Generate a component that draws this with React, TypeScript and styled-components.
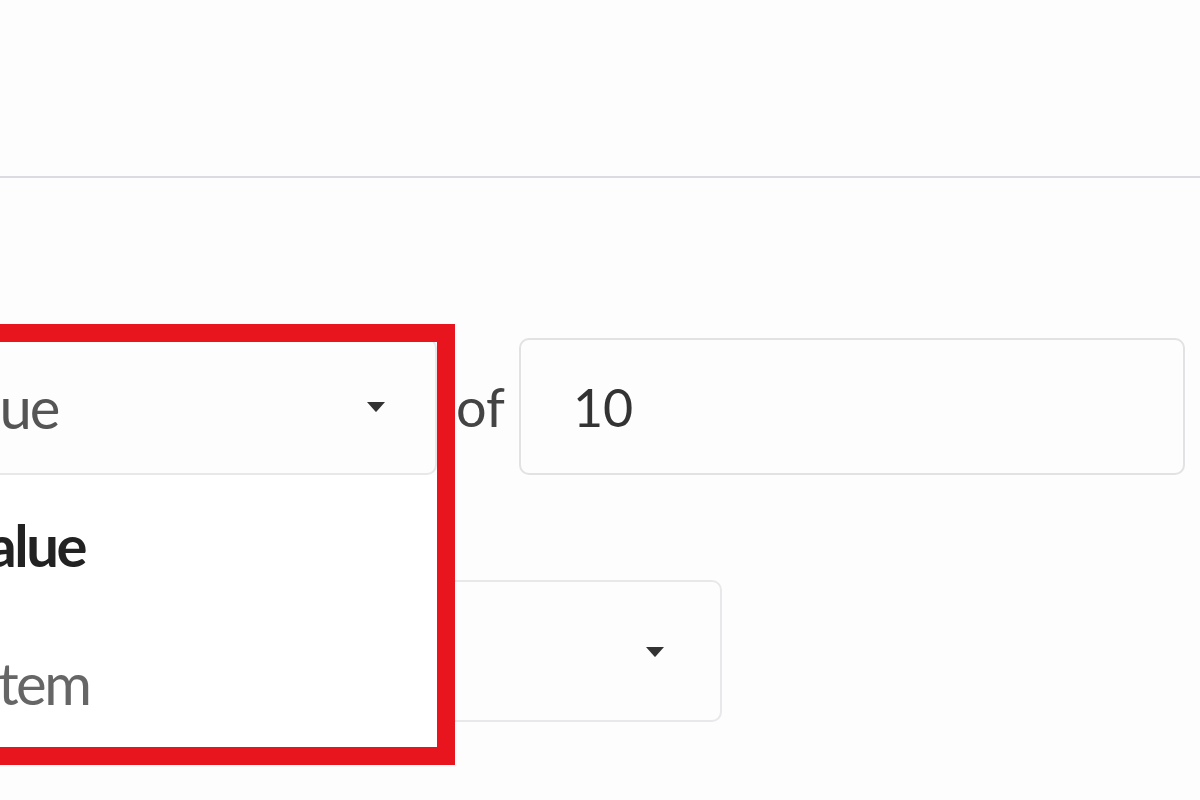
import styled, { createGlobalStyle } from 'styled-components';

const GlobalStyle = createGlobalStyle`
  html, body {
    margin: 0;
    padding: 0;
    background: #fdfdfd;
    overflow: hidden;
  }
  body {
    font-family: Lato, "Open Sans", sans-serif;
  }
`;

const Page = styled.div`
  width: 1200px;
  height: 800px;
  overflow: hidden;
  background: #fdfdfd;
`;

const Header = styled.header`
  height: 176px;
  border-bottom: 2px solid #dcdce0;
`;

const Form = styled.form`
  display: flex;
  flex-direction: column;
  gap: 105px;
  padding-top: 160px;
  margin-left: -120px;
`;

const Row = styled.div`
  display: flex;
  align-items: center;
`;

const Field = styled.div<{ $width: number; $height: number }>`
  position: relative;
  width: ${(p) => p.$width}px;
  height: ${(p) => p.$height}px;
  flex-shrink: 0;
`;

const Trigger = styled.div<{ $pad: number }>`
  box-sizing: border-box;
  height: 100%;
  display: flex;
  align-items: center;
  justify-content: space-between;
  padding: 0 ${(p) => p.$pad}px 0 46px;
  border: 2px solid #e8e8ea;
  border-radius: 10px;
  background: #fdfdfd;
  font-size: 58px;
  letter-spacing: -2px;
  color: #555;
`;

const Caret = styled.svg`
  width: 20px;
  height: 11px;
  fill: #333;
  flex-shrink: 0;
`;

const Menu = styled.ul`
  position: absolute;
  top: 100%;
  left: 0;
  right: 0;
  margin: 0;
  padding: 0;
  list-style: none;
  background: #fff;
  z-index: 2;
`;

const Option = styled.li<{ $selected?: boolean; $inset: number }>`
  height: 138px;
  display: flex;
  align-items: center;
  padding-left: ${(p) => p.$inset}px;
  font-size: 58px;
  letter-spacing: -2.5px;
  font-weight: ${(p) => (p.$selected ? 700 : 400)};
  color: ${(p) => (p.$selected ? '#222' : '#666')};
`;

const Highlight = styled.div`
  position: absolute;
  top: -14px;
  right: -18px;
  bottom: -290px;
  left: -40px;
  border: 18px solid #e8151e;
  pointer-events: none;
  z-index: 3;
`;

const Word = styled.span`
  margin: 0 14px 0 19px;
  font-size: 54px;
  color: #444;
`;

const Input = styled.input`
  box-sizing: border-box;
  width: 666px;
  height: 137px;
  padding: 0 0 0 52px;
  border: 2px solid #e2e2e4;
  border-radius: 10px;
  background: #fdfdfd;
  font-family: Lato, "Open Sans", sans-serif;
  font-size: 52px;
  color: #333;
  outline: none;
`;

function DownCaret() {
  return (
    <Caret viewBox="0 0 20 11">
      <path d="M1 1h18l-8.2 9.2a1 1 0 0 1-1.6 0z" />
    </Caret>
  );
}

export default function App() {
  return (
    <Page>
      <GlobalStyle />
      <Header />
      <Form>
        <Row>
          <Field $width={557} $height={137}>
            <Trigger $pad={49}>
              <span>Value</span>
              <DownCaret />
            </Trigger>
            <Menu>
              <Option $selected $inset={74}>Value</Option>
              <Option $inset={105}>Item</Option>
            </Menu>
            <Highlight />
          </Field>
          <Word>of</Word>
          <Input defaultValue="10" />
        </Row>
        <Row>
          <Field $width={842} $height={142}>
            <Trigger $pad={55}>
              <span />
              <DownCaret />
            </Trigger>
          </Field>
        </Row>
      </Form>
    </Page>
  );
}
